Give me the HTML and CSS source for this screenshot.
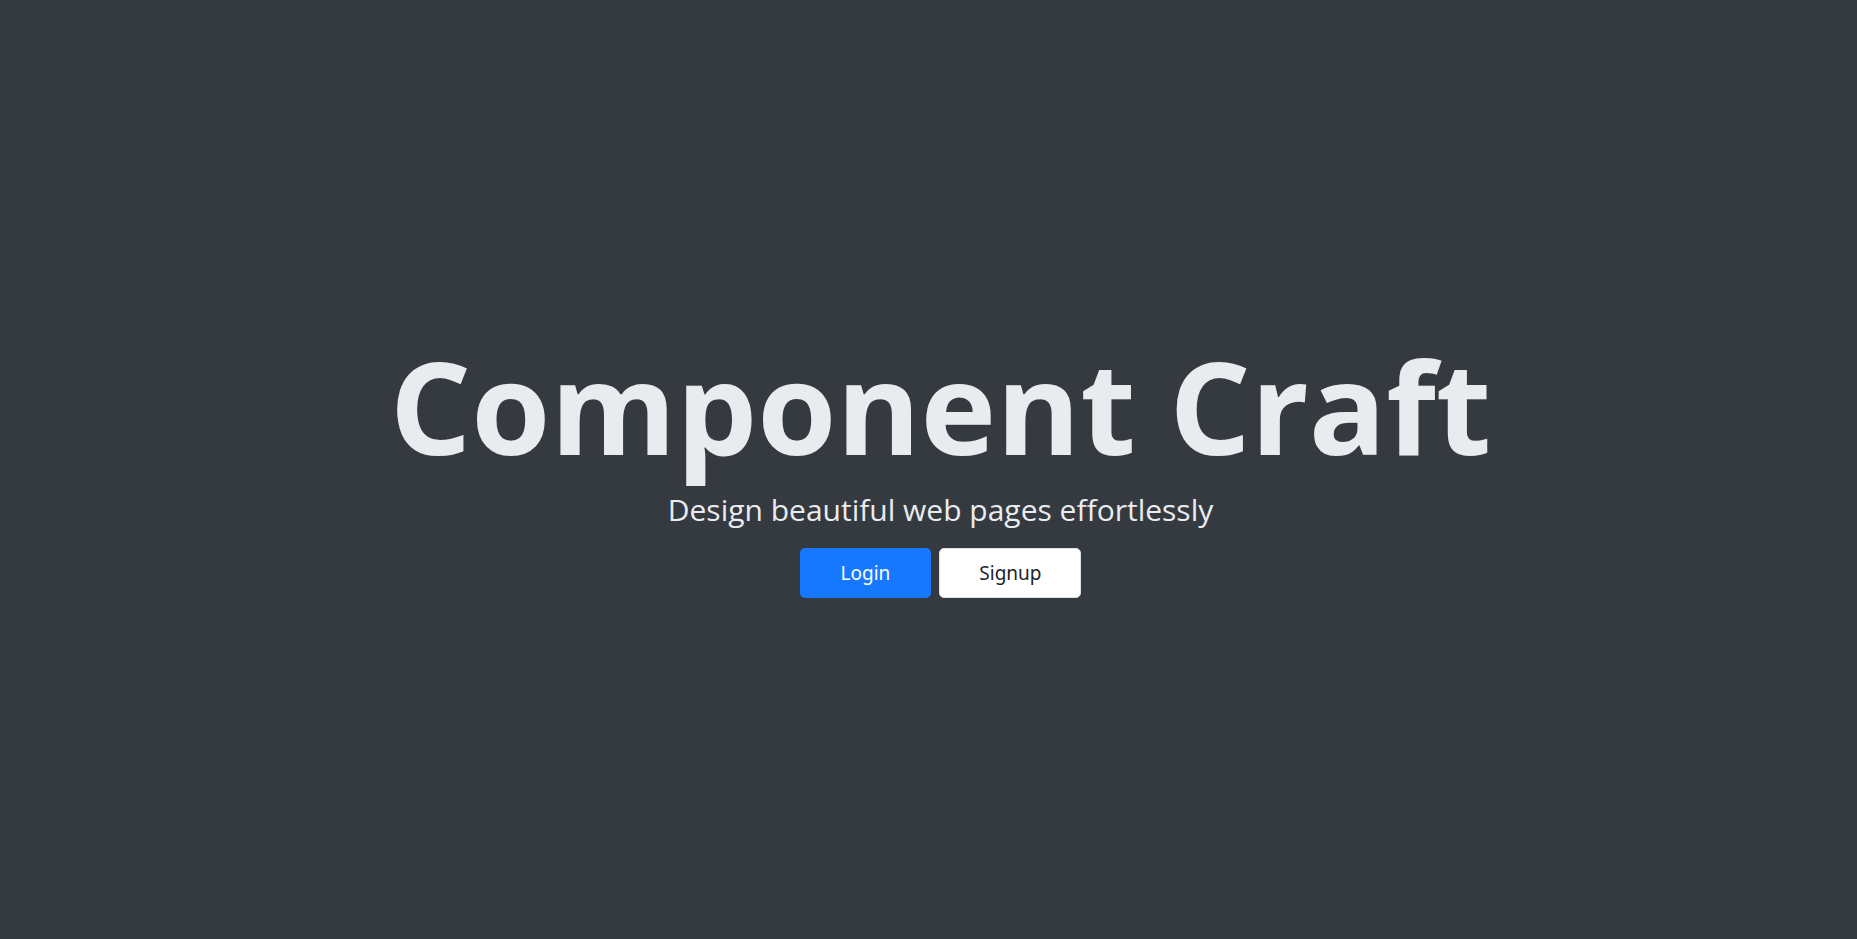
FILE: index.html
```html
<!DOCTYPE html>
<html lang="en">
<head>
<meta charset="utf-8">
<title>Component Craft</title>
<link rel="stylesheet" href="styles.css">
</head>
<body>
<main class="hero">
  <h1 class="hero-title">Component Craft</h1>
  <p class="hero-subtitle">Design beautiful web pages effortlessly</p>
  <div class="hero-actions">
    <button class="btn btn-primary">Login</button>
    <button class="btn btn-light">Signup</button>
  </div>
</main>
</body>
</html>
```

FILE: styles.css
```css
html, body {
  margin: 0;
  padding: 0;
  height: 100%;
}
body {
  background: #343a40;
  font-family: "Open Sans", "Noto Sans", sans-serif;
  color: #e9ecef;
}
.hero {
  min-height: 100vh;
  box-sizing: border-box;
  padding-left: 24px;
  display: flex;
  flex-direction: column;
  align-items: center;
  justify-content: center;
}
.hero-title {
  margin: 0;
  font-size: 128px;
  line-height: 130px;
  font-weight: 700;
  color: #e9ecef;
}
.hero-subtitle {
  margin: 21px 0 0;
  font-size: 30px;
  line-height: 36px;
  font-weight: 400;
  color: #e9ecef;
}
.hero-actions {
  margin-top: 20px;
  display: flex;
  gap: 8px;
}
.btn {
  height: 50px;
  padding: 0 40px;
  border: 1px solid transparent;
  border-radius: 5px;
  font-family: "Noto Sans", "Open Sans", sans-serif;
  font-size: 19px;
  cursor: pointer;
}
.btn-primary {
  background: #1677ff;
  color: #fff;
}
.btn-light {
  background: #fff;
  color: #212529;
  border-color: #dee2e6;
  padding: 0 39px;
}
```
